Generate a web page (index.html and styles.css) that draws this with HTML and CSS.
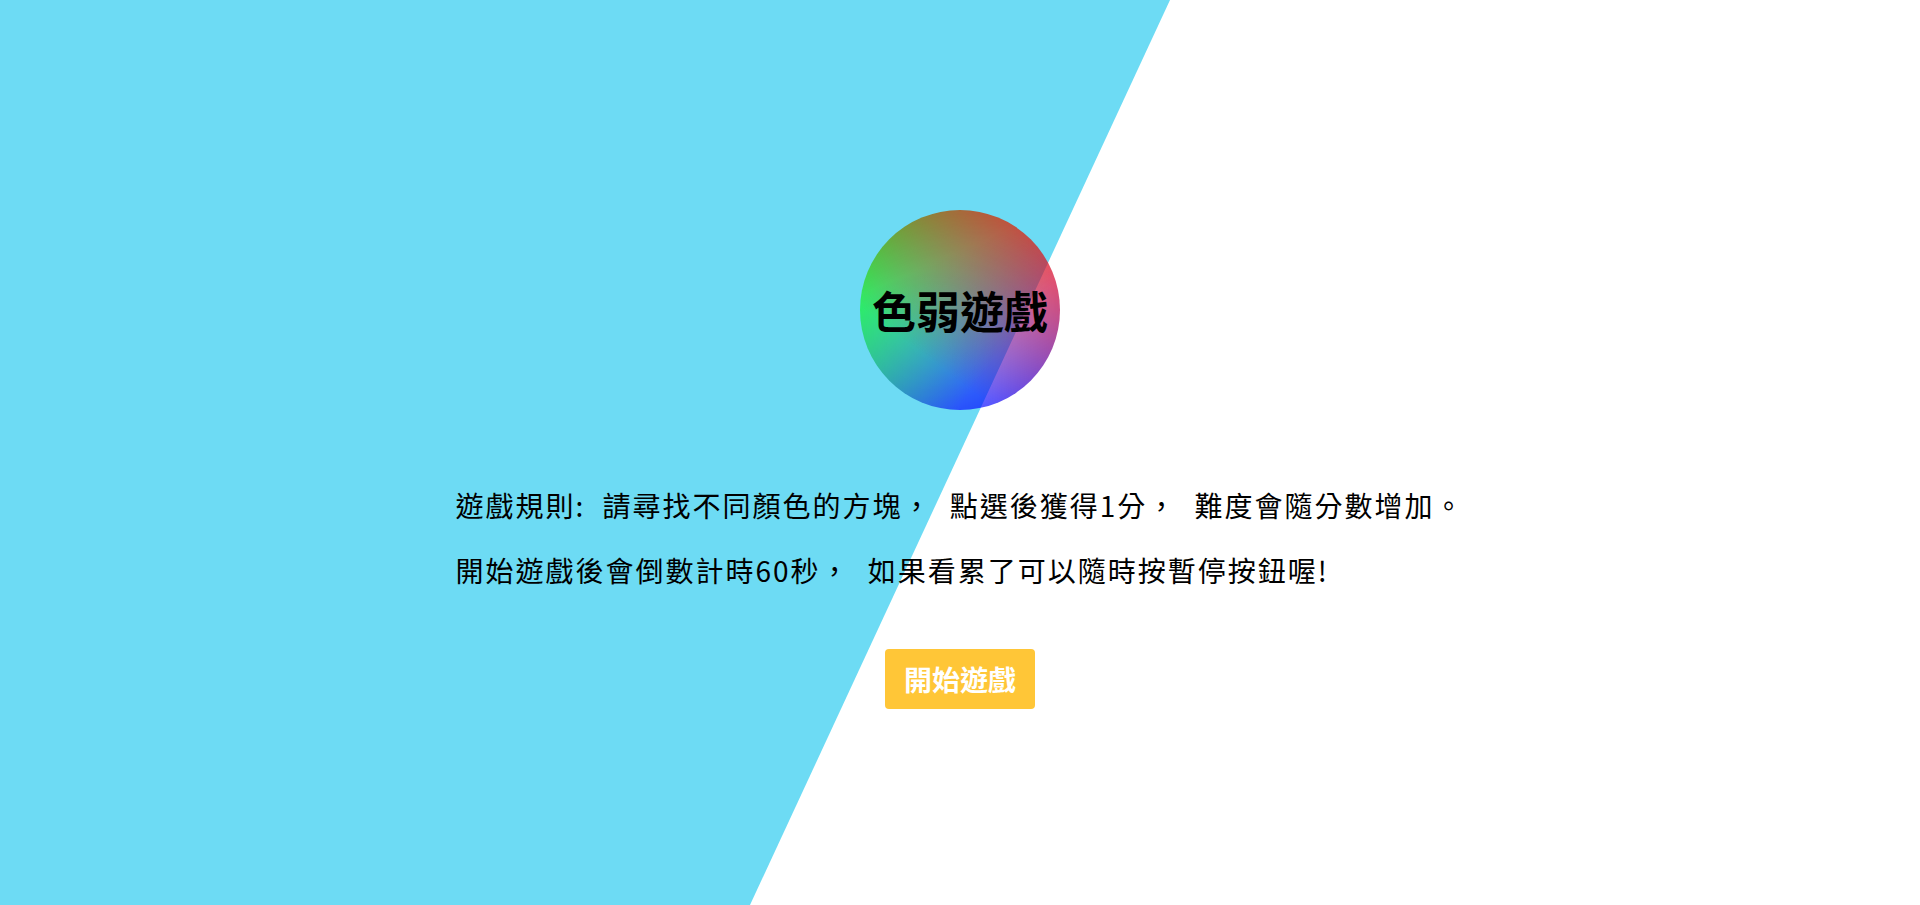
FILE: index.html
```html
<!DOCTYPE html>
<html lang="zh-Hant">
<head>
<meta charset="utf-8">
<title>色弱遊戲</title>
<link rel="stylesheet" href="styles.css">
</head>
<body>
<div class="bg-slant"></div>
<main class="intro">
  <div class="logo"><h1 class="logo-title">色弱遊戲</h1></div>
  <div class="rules">
    <p class="rule-line">遊戲規則: 請尋找不同顏色的方塊， 點選後獲得1分， 難度會隨分數增加。</p>
    <p class="rule-line">開始遊戲後會倒數計時60秒， 如果看累了可以隨時按暫停按鈕喔!</p>
  </div>
  <button class="start-btn" type="button">開始遊戲</button>
</main>
</body>
</html>
```

FILE: styles.css
```css
html, body {
  margin: 0;
  padding: 0;
  height: 100%;
}
body {
  background: #ffffff;
  font-family: "Noto Sans CJK JP", sans-serif;
  overflow: hidden;
  position: relative;
}
.bg-slant {
  position: absolute;
  inset: 0;
  background: #6ddbf4;
  clip-path: polygon(0 0, 1170px 0, 750px 100%, 0 100%);
  z-index: 0;
}
.intro {
  position: relative;
  z-index: 1;
  display: flex;
  flex-direction: column;
  align-items: center;
  padding-top: 210px;
}
.logo {
  width: 200px;
  height: 200px;
  border-radius: 50%;
  display: flex;
  align-items: center;
  justify-content: center;
  background:
    linear-gradient(217deg, rgba(255,0,0,.8), rgba(255,0,0,0) 70.71%),
    linear-gradient(127deg, rgba(0,255,0,.8), rgba(0,255,0,0) 70.71%),
    linear-gradient(336deg, rgba(0,0,255,.8), rgba(0,0,255,0) 70.71%);
}
.logo-title {
  margin: 0;
  font-size: 44px;
  font-weight: 700;
  color: #000;
  line-height: 1;
  white-space: nowrap;
}
.rules {
  margin-top: 63px;
  text-align: left;
}
.rule-line {
  margin: 0;
  font-size: 28px;
  letter-spacing: 2px;
  word-spacing: 9px;
  line-height: 65px;
  color: #000;
  white-space: nowrap;
}
.start-btn {
  margin-top: 46px;
  width: 150px;
  height: 60px;
  border: none;
  border-radius: 4px;
  background: #ffc637;
  color: #ffffff;
  font-family: "Noto Sans CJK JP", sans-serif;
  font-size: 28px;
  font-weight: 700;
  padding: 0;
  cursor: pointer;
}
```
